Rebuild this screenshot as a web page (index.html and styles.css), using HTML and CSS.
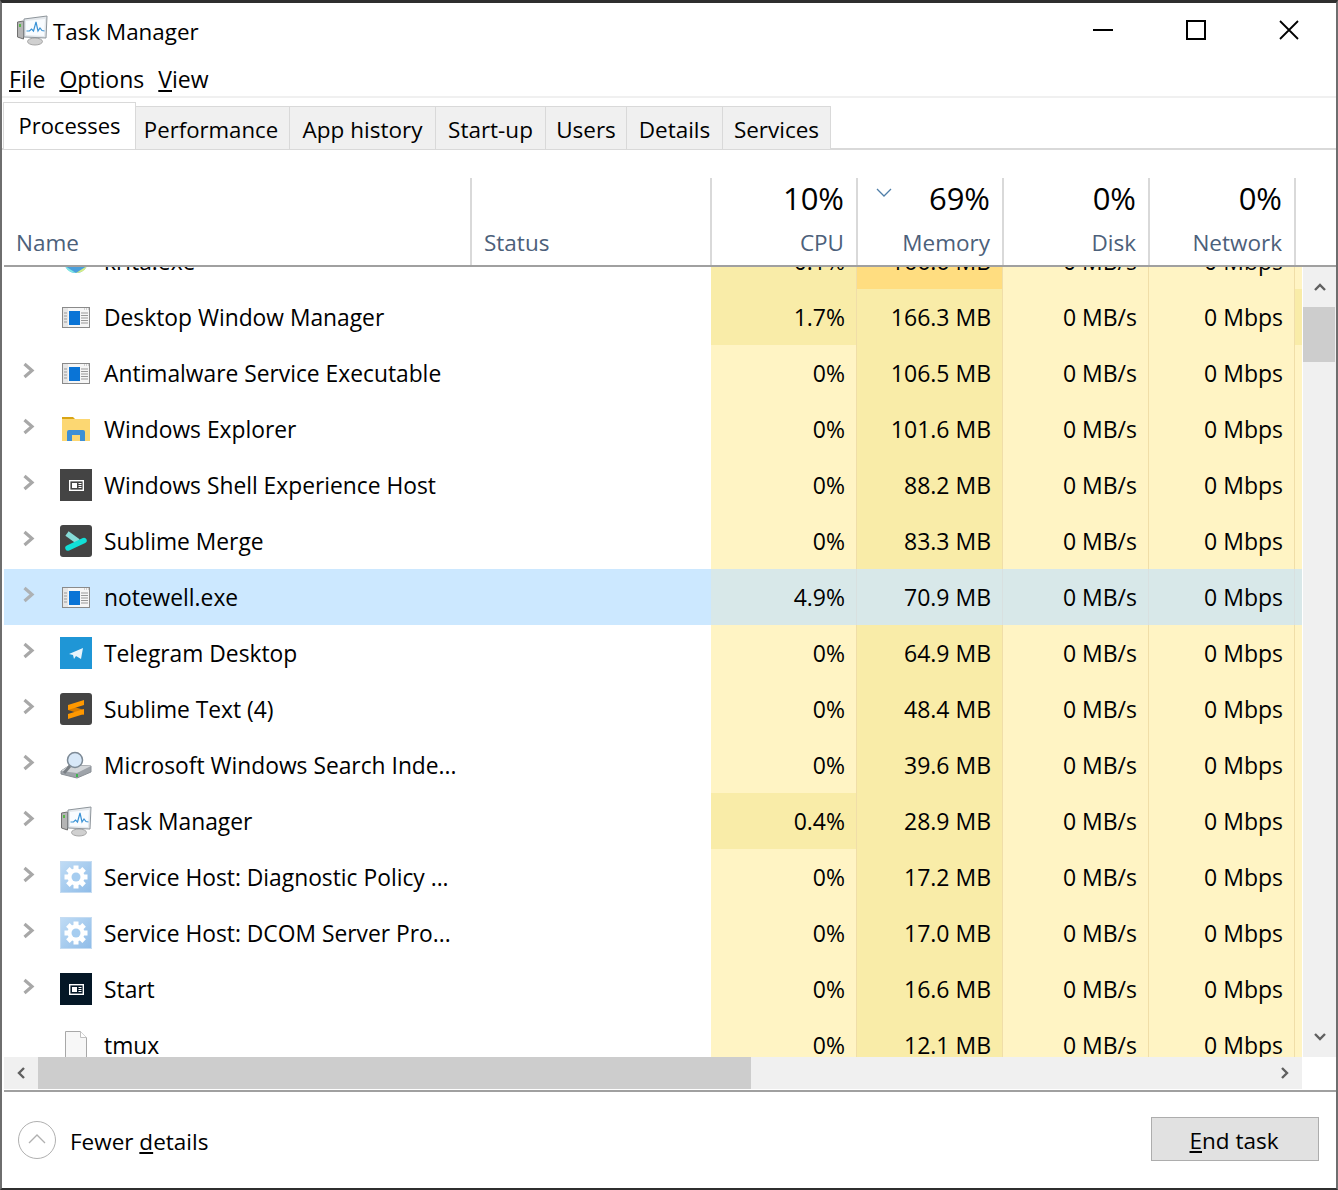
FILE: index.html
```html
<!DOCTYPE html>
<html lang="en">
<head>
<meta charset="utf-8">
<title>Task Manager</title>
<link rel="stylesheet" href="styles.css">
</head>
<body>
<svg class="defs" width="0" height="0" aria-hidden="true">
  <defs>
    <linearGradient id="g-gear" x1="0" y1="0" x2="1" y2="1">
      <stop offset="0" stop-color="#c0dcf5"/>
      <stop offset="1" stop-color="#8fbce8"/>
    </linearGradient>
    <symbol id="i-exe" viewBox="0 0 28 21">
      <rect x=".5" y=".5" width="27" height="20" fill="#f6f6f6" stroke="#8a8a8a"/>
      <rect x="1" y="1" width="5" height="19" fill="#e6e6e6"/>
      <rect x="7" y="4" width="11" height="14" fill="#0a74d6"/>
      <path d="M2 6h3M2 9h3M2 12h3M2 15h3M19 6h7M19 8.500h7M19 11h7M19 13.500h7M19 16h7" stroke="#999"/>
      <path d="M22 2h1M24 2h1M26 2h1" stroke="#aaa"/>
    </symbol>
    <symbol id="i-taskmgr" viewBox="0 0 32 32">
      <ellipse cx="19" cy="27.500" rx="7.500" ry="3.500" fill="#d0d0d0" stroke="#a5a5a5"/>
      <path d="M1.500 8l6-1v18l-6-2z" fill="#b5b5b5" stroke="#707070"/>
      <path d="M8 5l23-3-1 22L8 23z" fill="#e4e8ec" stroke="#8e959b"/>
      <path d="M10 7l19-2-1 17-18-1z" fill="#f9fcff"/>
      <path d="M10.500 17h3l2-2 2 2 2.500-9 2 9 2-3 2 2.500 2.500.500" fill="none" stroke="#3b93d6" stroke-width="1.200"/>
      <rect x="3" y="10" width="2" height="3" fill="#58b848"/>
    </symbol>
    <symbol id="i-card" viewBox="0 0 15 11">
      <rect x=".7" y=".7" width="13.600" height="9.600" fill="none" stroke="#fff" stroke-width="1.400"/>
      <path d="M3 3h5v5H3z" fill="#fff"/>
      <path d="M9.500 3.500h3M9.500 5.500h3M9.500 7.500h3" stroke="#fff"/>
    </symbol>
    <symbol id="i-gear" viewBox="0 0 32 32">
      <rect x=".5" y=".5" width="31" height="31" fill="url(#g-gear)" stroke="#c5dcf2"/>
      <g fill="#fff">
        <circle cx="16" cy="16" r="8.500"/>
        <rect x="13.500" y="4.500" width="5" height="23"/>
        <rect x="13.500" y="4.500" width="5" height="23" transform="rotate(45 16 16)"/>
        <rect x="13.500" y="4.500" width="5" height="23" transform="rotate(90 16 16)"/>
        <rect x="13.500" y="4.500" width="5" height="23" transform="rotate(135 16 16)"/>
      </g>
      <circle cx="16" cy="16" r="4.500" fill="#a6cdf0"/>
    </symbol>
    <symbol id="i-chev" viewBox="0 0 12 17">
      <path d="M1.500 2l7.500 6.500-7.500 6.500" fill="none" stroke="#a8a8a8" stroke-width="3.200"/>
    </symbol>
  </defs>
</svg>
<div class="window">
  <header class="titlebar">
    <svg class="title-icon"><use href="#i-taskmgr"/></svg>
    <span class="title-text">Task Manager</span>
    <div class="win-controls">
      <svg class="win-btn" viewBox="0 0 20 20"><path d="M0 10h20" stroke="#000" stroke-width="2"/></svg>
      <svg class="win-btn" viewBox="0 0 20 20"><rect x="1" y="1" width="18" height="18" fill="none" stroke="#000" stroke-width="2"/></svg>
      <svg class="win-btn" viewBox="0 0 20 20"><path d="M1 1l18 18M19 1L1 19" stroke="#000" stroke-width="1.800"/></svg>
    </div>
  </header>
  <nav class="menubar">
    <span><u>F</u>ile</span>
    <span><u>O</u>ptions</span>
    <span><u>V</u>iew</span>
  </nav>
  <div class="tabs">
    <div class="tab active">Processes</div>
    <div class="tab">Performance</div>
    <div class="tab">App history</div>
    <div class="tab">Start-up</div>
    <div class="tab">Users</div>
    <div class="tab">Details</div>
    <div class="tab">Services</div>
  </div>
  <div class="table-head">
    <div class="hcol col-name"><span class="hlabel">Name</span></div>
    <div class="hcol col-status"><span class="hlabel">Status</span></div>
    <div class="hcol col-num"><span class="hpct">10%</span><span class="hlabel">CPU</span></div>
    <div class="hcol col-num sorted">
      <svg class="sort-arrow" viewBox="0 0 16 10"><path d="M1 1l7 7 7-7" fill="none" stroke="#4f7ea8" stroke-width="1.300"/></svg>
      <span class="hpct">69%</span><span class="hlabel">Memory</span>
    </div>
    <div class="hcol col-num"><span class="hpct">0%</span><span class="hlabel">Disk</span></div>
    <div class="hcol col-num"><span class="hpct">0%</span><span class="hlabel">Network</span></div>
  </div>
  <div class="list-area">
    <div class="rows">
      <div class="row">
        <div class="cell col-name name-cell">
          <span class="expander"><svg class="chev"><use href="#i-chev"/></svg></span>
          <span class="icon-box"><svg class="ico-krita" viewBox="0 0 24 24"><circle cx="12" cy="12" r="12" fill="#4a9fdc"/><path d="M1 17a12 12 0 0 0 11 7z" fill="#7ee8e4"/><path d="M23 17a12 12 0 0 1-11 7z" fill="#d6ee84"/></svg></span>
          <span class="pname">krita.exe</span>
        </div>
        <div class="cell col-status"></div>
        <div class="cell col-num heat-1">0.1%</div>
        <div class="cell col-num heat-3">166.6 MB</div>
        <div class="cell col-num heat-0">0 MB/s</div>
        <div class="cell col-num heat-0">0 Mbps</div>
        <div class="cell filler heat-0"></div>
      </div>
      <div class="row">
        <div class="cell col-name name-cell">
          <span class="expander"></span>
          <span class="icon-box"><svg class="ico-exe"><use href="#i-exe"/></svg></span>
          <span class="pname">Desktop Window Manager</span>
        </div>
        <div class="cell col-status"></div>
        <div class="cell col-num heat-1">1.7%</div>
        <div class="cell col-num heat-1">166.3 MB</div>
        <div class="cell col-num heat-0">0 MB/s</div>
        <div class="cell col-num heat-0">0 Mbps</div>
        <div class="cell filler heat-1"></div>
      </div>
      <div class="row">
        <div class="cell col-name name-cell">
          <span class="expander"><svg class="chev"><use href="#i-chev"/></svg></span>
          <span class="icon-box"><svg class="ico-exe"><use href="#i-exe"/></svg></span>
          <span class="pname">Antimalware Service Executable</span>
        </div>
        <div class="cell col-status"></div>
        <div class="cell col-num heat-0">0%</div>
        <div class="cell col-num heat-1">106.5 MB</div>
        <div class="cell col-num heat-0">0 MB/s</div>
        <div class="cell col-num heat-0">0 Mbps</div>
        <div class="cell filler heat-0"></div>
      </div>
      <div class="row">
        <div class="cell col-name name-cell">
          <span class="expander"><svg class="chev"><use href="#i-chev"/></svg></span>
          <span class="icon-box"><svg class="ico-32" viewBox="0 0 32 32"><path d="M2 4h11l2 2H2z" fill="#d9a514"/><path d="M2 6h28v22H2z" fill="#fcd772"/><path d="M7 28V19a2 2 0 0 1 2-2h14a2 2 0 0 1 2 2v9h-5v-6h-8v6z" fill="#3d8fd6"/></svg></span>
          <span class="pname">Windows Explorer</span>
        </div>
        <div class="cell col-status"></div>
        <div class="cell col-num heat-0">0%</div>
        <div class="cell col-num heat-1">101.6 MB</div>
        <div class="cell col-num heat-0">0 MB/s</div>
        <div class="cell col-num heat-0">0 Mbps</div>
        <div class="cell filler heat-0"></div>
      </div>
      <div class="row">
        <div class="cell col-name name-cell">
          <span class="expander"><svg class="chev"><use href="#i-chev"/></svg></span>
          <span class="icon-box tile-dark"><svg class="ico-card"><use href="#i-card"/></svg></span>
          <span class="pname">Windows Shell Experience Host</span>
        </div>
        <div class="cell col-status"></div>
        <div class="cell col-num heat-0">0%</div>
        <div class="cell col-num heat-1">88.2 MB</div>
        <div class="cell col-num heat-0">0 MB/s</div>
        <div class="cell col-num heat-0">0 Mbps</div>
        <div class="cell filler heat-0"></div>
      </div>
      <div class="row">
        <div class="cell col-name name-cell">
          <span class="expander"><svg class="chev"><use href="#i-chev"/></svg></span>
          <span class="icon-box tile-dark tile-round"><svg class="ico-32" viewBox="0 0 32 32"><path d="M7 8.500l11 8" stroke="#86dcd8" stroke-width="5.500" fill="none"/><path d="M8 23l16-7.500" stroke="#12e0d8" stroke-width="5.500" stroke-linecap="round" fill="none"/></svg></span>
          <span class="pname">Sublime Merge</span>
        </div>
        <div class="cell col-status"></div>
        <div class="cell col-num heat-0">0%</div>
        <div class="cell col-num heat-1">83.3 MB</div>
        <div class="cell col-num heat-0">0 MB/s</div>
        <div class="cell col-num heat-0">0 Mbps</div>
        <div class="cell filler heat-0"></div>
      </div>
      <div class="row selected">
        <div class="cell col-name name-cell">
          <span class="expander"><svg class="chev chev-sel"><use href="#i-chev"/></svg></span>
          <span class="icon-box"><svg class="ico-exe"><use href="#i-exe"/></svg></span>
          <span class="pname">notewell.exe</span>
        </div>
        <div class="cell col-status"></div>
        <div class="cell col-num heat-s">4.9%</div>
        <div class="cell col-num heat-s">70.9 MB</div>
        <div class="cell col-num heat-s">0 MB/s</div>
        <div class="cell col-num heat-s">0 Mbps</div>
        <div class="cell filler heat-s"></div>
      </div>
      <div class="row">
        <div class="cell col-name name-cell">
          <span class="expander"><svg class="chev"><use href="#i-chev"/></svg></span>
          <span class="icon-box tile-blue"><svg class="ico-32" viewBox="0 0 32 32"><path d="M9 17l14-6-2 11-5-3-2 3-1-4z" fill="#e8f4fb"/></svg></span>
          <span class="pname">Telegram Desktop</span>
        </div>
        <div class="cell col-status"></div>
        <div class="cell col-num heat-0">0%</div>
        <div class="cell col-num heat-1">64.9 MB</div>
        <div class="cell col-num heat-0">0 MB/s</div>
        <div class="cell col-num heat-0">0 Mbps</div>
        <div class="cell filler heat-0"></div>
      </div>
      <div class="row">
        <div class="cell col-name name-cell">
          <span class="expander"><svg class="chev"><use href="#i-chev"/></svg></span>
          <span class="icon-box tile-dark tile-round"><svg class="ico-32" viewBox="0 0 32 32"><path d="M8 12l16 5v5L8 17z" fill="#d87c00"/><path d="M8 12l16-5v5L8 17zM8 21l16-5v5L8 26z" fill="#ff9800"/></svg></span>
          <span class="pname">Sublime Text (4)</span>
        </div>
        <div class="cell col-status"></div>
        <div class="cell col-num heat-0">0%</div>
        <div class="cell col-num heat-1">48.4 MB</div>
        <div class="cell col-num heat-0">0 MB/s</div>
        <div class="cell col-num heat-0">0 Mbps</div>
        <div class="cell filler heat-0"></div>
      </div>
      <div class="row">
        <div class="cell col-name name-cell">
          <span class="expander"><svg class="chev"><use href="#i-chev"/></svg></span>
          <span class="icon-box"><svg class="ico-32" viewBox="0 0 32 32"><path d="M1 22l9-6 21 1v6l-14 6-16-4z" fill="#9ea3a9" stroke="#8a8f95"/><path d="M1 22l9-6 21 1-14 7z" fill="#d3d6d9"/><circle cx="15" cy="11" r="7.500" fill="#d8e8f8" stroke="#7d8a96" stroke-width="1.500"/><path d="M10 17l-6 7" stroke="#7a7f85" stroke-width="3"/><rect x="16" y="25" width="2" height="3" fill="#3fb34f"/></svg></span>
          <span class="pname">Microsoft Windows Search Inde...</span>
        </div>
        <div class="cell col-status"></div>
        <div class="cell col-num heat-0">0%</div>
        <div class="cell col-num heat-1">39.6 MB</div>
        <div class="cell col-num heat-0">0 MB/s</div>
        <div class="cell col-num heat-0">0 Mbps</div>
        <div class="cell filler heat-0"></div>
      </div>
      <div class="row">
        <div class="cell col-name name-cell">
          <span class="expander"><svg class="chev"><use href="#i-chev"/></svg></span>
          <span class="icon-box"><svg class="ico-32"><use href="#i-taskmgr"/></svg></span>
          <span class="pname">Task Manager</span>
        </div>
        <div class="cell col-status"></div>
        <div class="cell col-num heat-1">0.4%</div>
        <div class="cell col-num heat-1">28.9 MB</div>
        <div class="cell col-num heat-0">0 MB/s</div>
        <div class="cell col-num heat-0">0 Mbps</div>
        <div class="cell filler heat-0"></div>
      </div>
      <div class="row">
        <div class="cell col-name name-cell">
          <span class="expander"><svg class="chev"><use href="#i-chev"/></svg></span>
          <span class="icon-box"><svg class="ico-32"><use href="#i-gear"/></svg></span>
          <span class="pname">Service Host: Diagnostic Policy ...</span>
        </div>
        <div class="cell col-status"></div>
        <div class="cell col-num heat-0">0%</div>
        <div class="cell col-num heat-1">17.2 MB</div>
        <div class="cell col-num heat-0">0 MB/s</div>
        <div class="cell col-num heat-0">0 Mbps</div>
        <div class="cell filler heat-0"></div>
      </div>
      <div class="row">
        <div class="cell col-name name-cell">
          <span class="expander"><svg class="chev"><use href="#i-chev"/></svg></span>
          <span class="icon-box"><svg class="ico-32"><use href="#i-gear"/></svg></span>
          <span class="pname">Service Host: DCOM Server Pro...</span>
        </div>
        <div class="cell col-status"></div>
        <div class="cell col-num heat-0">0%</div>
        <div class="cell col-num heat-1">17.0 MB</div>
        <div class="cell col-num heat-0">0 MB/s</div>
        <div class="cell col-num heat-0">0 Mbps</div>
        <div class="cell filler heat-0"></div>
      </div>
      <div class="row">
        <div class="cell col-name name-cell">
          <span class="expander"><svg class="chev"><use href="#i-chev"/></svg></span>
          <span class="icon-box tile-navy"><svg class="ico-card"><use href="#i-card"/></svg></span>
          <span class="pname">Start</span>
        </div>
        <div class="cell col-status"></div>
        <div class="cell col-num heat-0">0%</div>
        <div class="cell col-num heat-1">16.6 MB</div>
        <div class="cell col-num heat-0">0 MB/s</div>
        <div class="cell col-num heat-0">0 Mbps</div>
        <div class="cell filler heat-0"></div>
      </div>
      <div class="row">
        <div class="cell col-name name-cell">
          <span class="expander"></span>
          <span class="icon-box"><svg class="ico-32" viewBox="0 0 32 32"><path d="M5.500 2.500h15l6 6v24h-21z" fill="#f7f7f7" stroke="#a8a8a8"/><path d="M20.500 2.500v6h6" fill="#fff" stroke="#c0c0c0"/></svg></span>
          <span class="pname">tmux</span>
        </div>
        <div class="cell col-status"></div>
        <div class="cell col-num heat-0">0%</div>
        <div class="cell col-num heat-1">12.1 MB</div>
        <div class="cell col-num heat-0">0 MB/s</div>
        <div class="cell col-num heat-0">0 Mbps</div>
        <div class="cell filler heat-0"></div>
      </div>
    </div>
    <div class="vscroll">
      <span class="sb-btn"><svg class="sb-arrow" viewBox="0 0 12 8"><path d="M1 7l5-5 5 5" fill="none" stroke="#606060" stroke-width="2.400"/></svg></span>
      <span class="vthumb"></span>
      <span class="sb-fill"></span>
      <span class="sb-btn"><svg class="sb-arrow" viewBox="0 0 12 8"><path d="M1 1l5 5 5-5" fill="none" stroke="#606060" stroke-width="2.400"/></svg></span>
    </div>
  </div>
  <div class="hscroll-row">
    <div class="hscroll">
      <span class="hbtn"><svg class="sb-arrow-h" viewBox="0 0 8 12"><path d="M7 1L2 6l5 5" fill="none" stroke="#606060" stroke-width="2.400"/></svg></span>
      <span class="hthumb"></span>
      <span class="sb-fill"></span>
      <span class="hbtn"><svg class="sb-arrow-h" viewBox="0 0 8 12"><path d="M1 1l5 5-5 5" fill="none" stroke="#606060" stroke-width="2.400"/></svg></span>
    </div>
  </div>
  <footer class="footer">
    <span class="fewer-circle"><svg class="fewer-arrow" viewBox="0 0 18 10"><path d="M1 9l8-8 8 8" fill="none" stroke="#b0b0b0" stroke-width="1.300"/></svg></span>
    <span class="fewer-text">Fewer <u>d</u>etails</span>
    <button class="end-task" type="button"><u>E</u>nd task</button>
  </footer>
</div>
</body>
</html>
```
FILE: styles.css
```css
* { box-sizing: border-box; }
html, body { margin: 0; padding: 0; height: 100%; }
body {
  background: #2b2b2b;
  font-family: "Open Sans", "Noto Sans", "Liberation Sans", sans-serif;
  color: #000;
  overflow: hidden;
}
.defs { position: absolute; }
.window {
  width: 1338px;
  height: 1190px;
  display: flex;
  flex-direction: column;
  background: #fff;
  border-top: 3px solid #2f2f2f;
  border-bottom: 2px solid #2f2f2f;
  border-left: 2px solid #6e6e6e;
  border-right: 2px solid #6e6e6e;
  font-size: 23px;
}
.titlebar {
  height: 53px;
  display: flex;
  align-items: center;
  padding-left: 14px;
  flex: none;
}
.title-icon { width: 32px; height: 32px; flex: none; }
.title-text { margin-left: 5px; padding-top: 4px; font-size: 22.4px; }
.win-controls {
  margin-left: auto;
  margin-right: 37px;
  display: flex;
  gap: 73px;
}
.win-btn { width: 20px; height: 20px; }
.menubar {
  height: 42px;
  flex: none;
  display: flex;
  gap: 14px;
  padding: 7px 0 0 7px;
  border-bottom: 2px solid #f0f0f0;
}
.tabs {
  height: 52px;
  flex: none;
  display: flex;
  align-items: flex-end;
  border-bottom: 2px solid #d9d9d9;
  padding-left: 1px;
  font-size: 22.5px;
}
.tab {
  height: 43px;
  margin-bottom: -1px;
  padding: 3px 0 0;
  display: flex;
  flex: none;
  align-items: center;
  justify-content: center;
  background: #f0f0f0;
  border: 1px solid #d9d9d9;
  border-bottom: 0;
  margin-left: -1px;
}
.tab:nth-child(2) { width: 155px; padding-right: 3px; font-size: 22.2px; }
.tab:nth-child(3) { width: 147px; }
.tab:nth-child(4) { width: 111px; }
.tab:nth-child(5) { width: 82px; }
.tab:nth-child(6) { width: 97px; }
.tab:nth-child(7) { width: 109px; }
.tab.active {
  width: 133px;
  height: 47px;
  background: #fff;
  padding: 0 0 2px;
  margin-left: 0;
  font-size: 22px;
  position: relative;
  z-index: 1;
}
.table-head {
  height: 117px;
  flex: none;
  display: flex;
  padding: 28px 0 0 0;
  border-bottom: 2px solid #a0a0a0;
  margin-left: 2px;
  font-size: 22.5px;
}
.hcol {
  display: flex;
  flex-direction: column;
  justify-content: flex-end;
  border-right: 2px solid #d9d9d9;
  color: #4c607a;
  position: relative;
  padding-bottom: 6px;
}
.col-name { width: 468px; flex: none; }
.col-status { width: 240px; flex: none; }
.col-num { width: 146px; flex: none; text-align: right; }
.table-head .col-name { padding-left: 12px; }
.table-head .col-status { padding-left: 12px; }
.table-head .col-num { padding-right: 12px; }
.hpct {
  font-size: 31px;
  line-height: 42px;
  color: #000;
  margin-bottom: 8px;
}
.hlabel { line-height: 32px; }
.sort-arrow {
  position: absolute;
  left: 18px;
  top: 10px;
  width: 16px;
  height: 10px;
}
.list-area {
  height: 790px;
  flex: none;
  display: flex;
  overflow: hidden;
  margin-left: 2px;
}
.rows {
  width: 1298px;
  flex: none;
  margin-top: -34px;
  background: #fff;
}
.row {
  height: 56px;
  display: flex;
}
.row.selected { background: #cce8ff; }
.cell {
  display: flex;
  align-items: center;
  justify-content: flex-end;
  padding-right: 11px;
}
.cell.col-status { width: 239px; padding: 0; }
.name-cell { justify-content: flex-start; padding-right: 0; }
.cell.col-num { border-right: 1px solid #f0dea8; border-left: 0; }
.filler { flex: 1; padding: 0; }
.heat-0 { background: #fff4c4; }
.heat-1 { background: #f9eca8; }
.heat-3 { background: #ffdd80; }
.heat-s { background: #d8e8e9; }
.cell.heat-s { border-right-color: #d8e0e0; }
.expander {
  width: 56px;
  flex: none;
  display: flex;
  padding-left: 19px;
  margin-top: -6px;
}
.chev { width: 12px; height: 17px; }
.chev-sel { opacity: .85; }
.icon-box {
  width: 32px;
  height: 32px;
  flex: none;
  display: flex;
  align-items: center;
  justify-content: center;
}
.pname { margin-left: 12px; white-space: nowrap; font-size: 22.8px; }
.tile-dark { background: #444; }
.tile-round { border-radius: 3px; }
.tile-blue { background: #1f96d6; }
.tile-navy { background: #041726; }
.ico-exe { width: 28px; height: 21px; }
.ico-32 { width: 32px; height: 32px; }
.ico-card { width: 15px; height: 11px; }
.ico-krita { width: 24px; height: 24px; }
.vscroll {
  flex: none;
  width: 33px;
  display: flex;
  flex-direction: column;
  background: #f0f0f0;
  margin-left: 1px;
}
.sb-btn {
  height: 40px;
  flex: none;
  display: flex;
  align-items: center;
  justify-content: center;
}
.sb-arrow { width: 12px; height: 8px; }
.vthumb { height: 55px; background: #cdcdcd; flex: none; margin-right: 1px; }
.sb-fill { flex: 1; }
.hscroll-row {
  height: 33px;
  flex: none;
  margin-left: 2px;
}
.hscroll {
  width: 1298px;
  height: 32px;
  display: flex;
  background: #f0f0f0;
}
.hbtn {
  width: 34px;
  flex: none;
  display: flex;
  align-items: center;
  justify-content: center;
}
.sb-arrow-h { width: 8px; height: 12px; }
.hthumb { width: 713px; background: #cdcdcd; flex: none; }
.footer {
  flex: 1;
  display: flex;
  align-items: center;
  border-top: 2px solid #a0a0a0;
  padding-left: 14px;
  margin-left: 2px;
}
.fewer-circle {
  width: 38px;
  height: 38px;
  border: 1px solid #b0b0b0;
  border-radius: 50%;
  display: flex;
  align-items: center;
  justify-content: center;
  flex: none;
}
.fewer-arrow { width: 18px; height: 10px; margin-top: -3px; }
.fewer-text { margin-left: 14px; padding-top: 3px; font-size: 22.5px; }
.end-task {
  margin-left: auto;
  margin-right: 17px;
  margin-top: -2px;
  width: 168px;
  height: 44px;
  background: #e1e1e1;
  border: 1px solid #adadad;
  font: inherit;
  font-size: 22.5px;
  color: #000;
  padding: 2px 2px 0 0;
}
```
